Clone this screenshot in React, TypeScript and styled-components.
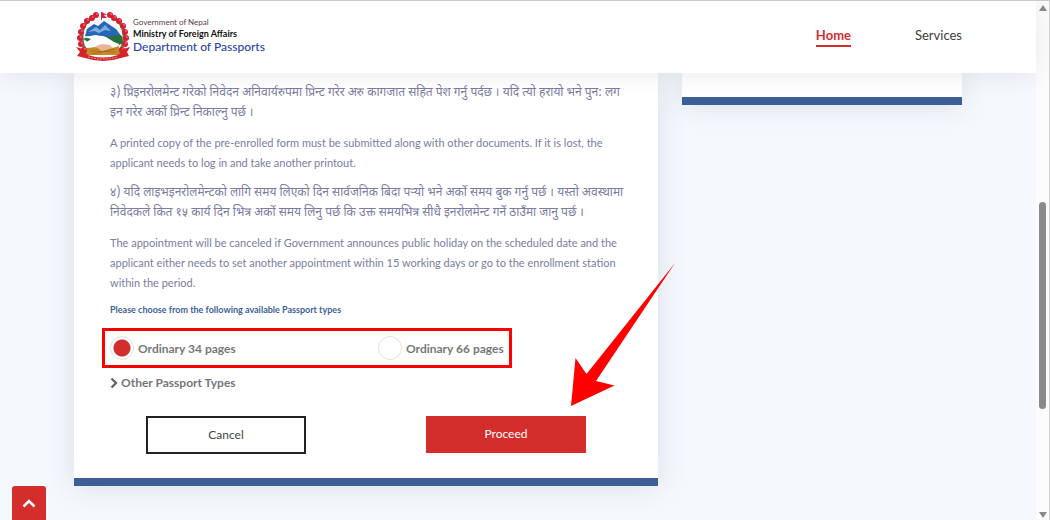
import React from "react";
import styled, { createGlobalStyle } from "styled-components";

const GlobalStyle = createGlobalStyle`
  * { box-sizing: border-box; }
  body {
    margin: 0;
    background: #f5f9fe;
    font-family: Lato, "Noto Sans", "Noto Sans Devanagari", sans-serif;
    color: #444;
  }
  button, input { font-family: inherit; }
`;

const Frame = styled.div`
  display: flex;
  height: 100vh;
  overflow: hidden;
  border-top: 1px solid #c9c9c9;
  border-right: 1px solid #d0d0d0;
`;

const Page = styled.div`
  flex: 1;
  min-width: 0;
`;

const Header = styled.header`
  position: relative;
  z-index: 2;
  display: flex;
  align-items: center;
  justify-content: space-between;
  height: 72px;
  padding: 0 74px;
  background: #fff;
  box-shadow: 0 4px 20px rgba(60, 60, 80, 0.09);
`;

const Brand = styled.a`
  display: flex;
  align-items: center;
  gap: 2px;
  text-decoration: none;
`;

const BrandText = styled.span`
  display: flex;
  flex-direction: column;
  padding-bottom: 4px;
  font-size: 8px;
  line-height: 12px;
  color: #5b3b43;
`;

const Ministry = styled.strong`
  font-size: 9px;
  color: #111;
`;

const Department = styled.span`
  font-size: 12px;
  font-weight: 500;
  line-height: 14px;
  color: #2b44b0;
`;

const Nav = styled.nav`
  display: flex;
  gap: 64px;
  padding-bottom: 2px;
`;

const NavLink = styled.a<{ $active?: boolean }>`
  padding-bottom: 1px;
  font-size: 13px;
  line-height: 18px;
  text-decoration: none;
  font-weight: ${(p) => (p.$active ? 700 : 400)};
  color: ${(p) => (p.$active ? "#d32d2c" : "#3c3c3c")};
  border-bottom: 2px solid ${(p) => (p.$active ? "#d32d2c" : "transparent")};
`;

const Main = styled.main`
  display: grid;
  grid-template-columns: minmax(0, 584fr) minmax(0, 280fr);
  align-items: start;
  gap: 24px;
  padding: 0 74px;
`;

const Card = styled.section`
  position: relative;
  padding: 10px 36px 24px;
  background: #fff;
  border-bottom: 8px solid #3d5f98;
  box-shadow: 0 0 28px rgba(40, 50, 70, 0.13);
`;

const SideCard = styled.aside`
  height: 32px;
  background: #fff;
  border-bottom: 8px solid #3d5f98;
  box-shadow: 0 0 28px rgba(40, 50, 70, 0.13);
`;

const Notice = styled.p`
  margin: 0 0 10px;
  font-size: 11px;
  line-height: 20px;
  color: #7a7d9f;
  white-space: nowrap;
`;

const Nepali = styled(Notice)`
  font-family: "Noto Sans Devanagari", "Noto Sans", sans-serif;
  font-size: 12px;
`;

const Choices = styled.fieldset`
  margin: 0;
  padding: 0;
  border: 0;
`;

const Legend = styled.legend`
  padding: 0;
  font-size: 9px;
  font-weight: 700;
  line-height: 14px;
  color: #3d5f98;
`;

const Highlight = styled.div`
  display: flex;
  width: 410px;
  margin: 11px 0 0 -8px;
  padding: 5px;
  border: 3px solid #fe0000;
`;

const Choice = styled.label`
  display: flex;
  flex: 268 0 0;
  align-items: center;
  gap: 4px;
  height: 24px;
  font-size: 12px;
  font-weight: 700;
  color: #777;
  white-space: nowrap;

  & + & { flex: 126 0 0; }
`;

const Radio = styled.input`
  appearance: none;
  width: 24px;
  height: 24px;
  margin: 0;
  border: 1px solid #e2e2e2;
  border-radius: 50%;
  background: #fff;

  &:checked {
    background: radial-gradient(circle, #d32d2c 8px, #fff 9px);
  }
`;

const OtherTypes = styled.button`
  display: flex;
  align-items: center;
  gap: 3px;
  margin-top: 6px;
  padding: 0;
  border: 0;
  background: none;
  font-size: 12px;
  font-weight: 700;
  line-height: 18px;
  color: #777;
`;

const Actions = styled.div`
  display: grid;
  grid-template-columns: 1fr 1fr;
  align-items: start;
  gap: 120px;
  margin-top: 24px;
  padding: 0 36px;
`;

const Button = styled.button<{ $primary?: boolean }>`
  height: ${(p) => (p.$primary ? 37 : 38)}px;
  padding: 0 6px 2px;
  border: ${(p) => (p.$primary ? "0" : "2px solid #222")};
  background: ${(p) => (p.$primary ? "#d32d2c" : "#fff")};
  color: ${(p) => (p.$primary ? "#fff" : "#444")};
  font-size: 12px;
`;

const Arrow = styled.svg`
  position: absolute;
  right: -18px;
  bottom: 72px;
`;

const ToTop = styled.button`
  position: fixed;
  left: 12px;
  bottom: 0;
  display: grid;
  place-items: center;
  width: 34px;
  height: 34px;
  padding: 0;
  border: 0;
  border-radius: 3px 3px 0 0;
  background: #d32d2c;
`;

const Scrollbar = styled.div`
  display: flex;
  flex-direction: column;
  align-items: center;
  justify-content: space-between;
  width: 13px;
  padding: 4px 0 2px;
  background: #fcfcfc;
`;

const Track = styled.div`
  flex: 1;
  width: 7px;
  padding: 191px 0 103px;
`;

const Thumb = styled.div`
  height: 100%;
  border-radius: 4px;
  background: #8a8a8a;
`;

const Triangle = styled.span<{ $down?: boolean }>`
  border: 4px solid transparent;
  border-top: ${(p) => (p.$down ? "6px solid #8a8a8a" : "0")};
  border-bottom: ${(p) => (p.$down ? "0" : "6px solid #8a8a8a")};
`;

const flowers = [
  [16, 6], [11, 9], [7, 14], [5, 20], [4, 26], [5, 32], [8, 38],
  [38, 6], [43, 9], [47, 14], [49, 20], [50, 26], [49, 32], [46, 38], [20, 3], [34, 3],
];

function Emblem() {
  return (
    <svg width="57" height="50" viewBox="-2 0 57 50" aria-hidden="true">
      <path d="M18 5Q6 11 6 24T14 42M36 5Q48 11 48 24T40 42" fill="none" stroke="#5f8a50" strokeWidth="3" />
      <circle cx="27" cy="25" r="19" fill="#f4f7fa" />
      <path d="M9 24 11 17 18 12 22 14 28 9 34 13 40 17 46 25 38 28 27 24 16 26Z" fill="#2765b8" />
      <path d="M12 20 20 15 24 18 29 13 35 19 29 18 23 21 18 19Z" fill="#82acd9" />
      <path d="M28 24 34 25 40 23 46 24 47 31 41 34 34 30Z M7 27 14 24 22 26 14 31Z" fill="#26733a" />
      <path d="M8 25 20 23 30 25 38 30 43 32 42 36 30 37 13 36 8 32 15 27Z" fill="#fff" />
      <path d="M20 34 26 32 34 33 37 36 30 40 21 38Z" fill="#eab59e" />
      <path d="M11 36 20 35 26 39 33 37 43 34 43 43 11 43Z" fill="#c88b24" />
      <path d="M14 39 40 40M16 42 39 37" stroke="#a8701c" />
      {flowers.map(([x, y]) => (
        <g key={`${x}-${y}`}>
          <circle cx={x} cy={y} r="3" fill="#d71e31" />
          <circle cx={x + 1} cy={y - 1} r="1" fill="#ef6470" />
        </g>
      ))}
      <path d="M26 0 31 3 28 3 31 6 26 6V8H25V0Z" fill="#cc2348" />
      <path d="M0 35 7 37 12 43Q27 48 42 43L47 37 54 35 51 40 53 44 45 46Q27 52 9 46L1 44 4 40Z" fill="#d4232d" />
      <path d="M12 45Q27 49 42 45" fill="none" stroke="#ef8b8b" strokeDasharray="2 1" />
    </svg>
  );
}

export default function App() {
  return (
    <>
      <GlobalStyle />
      <Frame>
        <Page>
          <Header>
            <Brand href="#">
              <Emblem />
              <BrandText>
                <span>Government of Nepal</span>
                <Ministry>Ministry of Foreign Affairs</Ministry>
                <Department>Department of Passports</Department>
              </BrandText>
            </Brand>
            <Nav>
              <NavLink href="#" $active>Home</NavLink>
              <NavLink href="#">Services</NavLink>
            </Nav>
          </Header>
          <Main>
            <Card>
              <Nepali lang="ne">
                ३) प्रिइनरोलमेन्ट गरेको निवेदन अनिवार्यरुपमा प्रिन्ट गरेर अरु कागजात सहित पेश गर्नु पर्दछ । यदि त्यो हरायो भने पुन: लग<br />
                इन गरेर अर्को प्रिन्ट निकाल्नु पर्छ ।
              </Nepali>
              <Notice>
                A printed copy of the pre-enrolled form must be submitted along with other documents. If it is lost, the<br />
                applicant needs to log in and take another printout.
              </Notice>
              <Nepali lang="ne">
                ४) यदि लाइभइनरोलमेन्टको लागि समय लिएको दिन सार्वजनिक बिदा पर्‍यो भने अर्को समय बुक गर्नु पर्छ । यस्तो अवस्थामा<br />
                निवेदकले कित १५ कार्य दिन भित्र अर्को समय लिनु पर्छ कि उक्त समयभित्र सीधै इनरोलमेन्ट गर्ने ठाउँमा जानु पर्छ ।
              </Nepali>
              <Notice>
                The appointment will be canceled if Government announces public holiday on the scheduled date and the<br />
                applicant either needs to set another appointment within 15 working days or go to the enrollment station<br />
                within the period.
              </Notice>
              <Choices>
                <Legend>Please choose from the following available Passport types</Legend>
                <Highlight>
                  <Choice>
                    <Radio type="radio" name="type" defaultChecked />
                    Ordinary 34 pages
                  </Choice>
                  <Choice>
                    <Radio type="radio" name="type" />
                    Ordinary 66 pages
                  </Choice>
                </Highlight>
              </Choices>
              <OtherTypes type="button">
                <svg width="8" height="12" viewBox="0 0 8 12" aria-hidden="true">
                  <path d="M1.5 1.5 6 6 1.5 10.5" fill="none" stroke="#666" strokeWidth="2.4" />
                </svg>
                Other Passport Types
              </OtherTypes>
              <Actions>
                <Button type="button">Cancel</Button>
                <Button type="button" $primary>Proceed</Button>
              </Actions>
              <Arrow width="106" height="144" viewBox="0 0 106 144" aria-hidden="true">
                <path d="M105 1 26 119 44.5 123.5 1 144 5.5 96 16.5 112Z" fill="#fe0000" />
              </Arrow>
            </Card>
            <SideCard />
          </Main>
        </Page>
        <Scrollbar aria-hidden="true">
          <Triangle />
          <Track><Thumb /></Track>
          <Triangle $down />
        </Scrollbar>
      </Frame>
      <ToTop type="button" aria-label="Back to top">
        <svg width="14" height="9" viewBox="0 0 14 9" aria-hidden="true">
          <path d="M1.5 7.5 7 2 12.5 7.5" fill="none" stroke="#fff" strokeWidth="2.6" />
        </svg>
      </ToTop>
    </>
  );
}
